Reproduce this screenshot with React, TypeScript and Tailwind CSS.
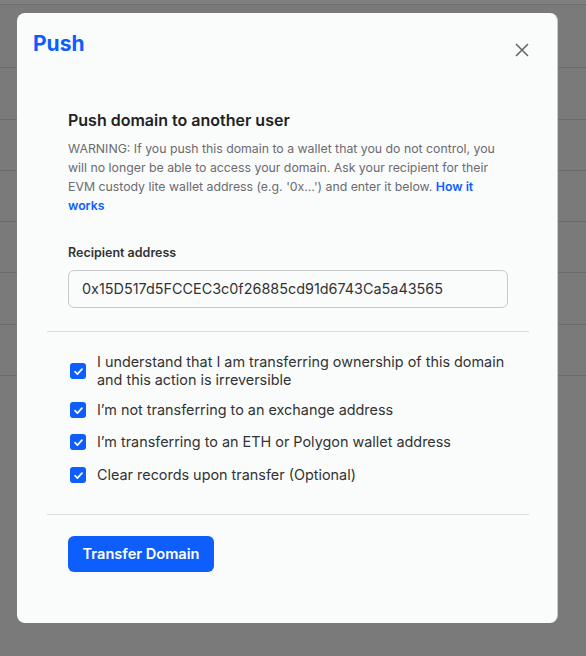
import React from "react";

const rows = [63, 52, 51, 51, 51, 52, 51];

function Check({ children, className = "" }: { children: React.ReactNode; className?: string }) {
  return (
    <label className={"flex items-center gap-[11px] " + className}>
      <span className="ml-[2px] flex h-[16px] w-[16px] shrink-0 items-center justify-center rounded-[3px] bg-[#0d5efc]">
        <svg width="11" height="11" viewBox="0 0 12 12" fill="none">
          <path d="M2.2 6.2l2.6 2.6 5-5.4" stroke="white" strokeWidth="1.8" strokeLinecap="round" strokeLinejoin="round" />
        </svg>
      </span>
      <span className="text-[14.4px] leading-[18px] text-[#333]">{children}</span>
    </label>
  );
}

export default function App() {
  return (
    <div className="relative h-[656px] w-[586px] overflow-hidden bg-[#7a7a7a]" style={{ fontFamily: "Inter, 'Noto Sans', sans-serif" }}>
      <div className="h-[5px] bg-[#808080] border-b border-[#6e6e6e]" />
      {rows.map((h, i) => (
        <div key={i} className="border-b border-[#6c6c6c]" style={{ height: h }} />
      ))}

      <div className="absolute left-[17px] top-[13px] flex h-[610px] w-[541px] flex-col rounded-[8px] border-r border-[#c8cad0] bg-[#fafcfc]">
        <div className="flex items-start justify-between pl-[16px] pr-[28px] pt-[17px]">
          <h1 className="text-[21px] font-bold leading-[28px] text-[#0d5efc]">Push</h1>
          <svg className="mt-[13px]" width="14" height="14" viewBox="0 0 14 14">
            <path d="M1 1l12 12M13 1L1 13" stroke="#666" strokeWidth="1.6" />
          </svg>
        </div>

        <div className="pl-[30px] pr-[28px] pt-[50px]">
          <div className="pl-[21px] pr-[21px]">
            <h2 className="text-[16px] font-semibold leading-[24px] text-[#222]">Push domain to another user</h2>
            <p className="mt-[7px] text-[12.3px] leading-[19px] text-[#6b6b70]">
              WARNING: If you push this domain to a wallet that you do not control, you will no longer be able to access your domain. Ask your recipient for their EVM custody lite wallet address (e.g. '0x...') and enter it below.{" "}
              <span className="font-semibold text-[#0d5efc]">How it works</span>
            </p>
            <div className="mt-[29px] text-[12.5px] font-semibold leading-[18px] text-[#333]">Recipient address</div>
            <div className="mt-[8px] flex h-[38px] w-[440px] items-center rounded-[6px] border border-[#c9c9cc] bg-[#fafcfc] px-[13px] text-[14.4px] text-[#333]">
              0x15D517d5FCCEC3c0f26885cd91d6743Ca5a43565
            </div>
          </div>

          <div className="mt-[23px] border-t border-[#dcdcdf]" />

          <div className="flex flex-col pl-[21px] pt-[21px]">
            <Check>
              I understand that I am transferring ownership of this domain
              <br />
              and this action is irreversible
            </Check>
            <Check className="mt-[12px]">I’m not transferring to an exchange address</Check>
            <Check className="mt-[14px]">I’m transferring to an ETH or Polygon wallet address</Check>
            <Check className="mt-[15px]">Clear records upon transfer (Optional)</Check>
          </div>

          <div className="mt-[30px] border-t border-[#dcdcdf]" />

          <div className="pl-[21px] pt-[21px]">
            <button className="flex h-[36px] w-[146px] items-center justify-center rounded-[6px] bg-[#0d5efc] pt-[2px] text-[14.6px] font-semibold text-white">
              Transfer Domain
            </button>
          </div>
        </div>
      </div>
    </div>
  );
}
